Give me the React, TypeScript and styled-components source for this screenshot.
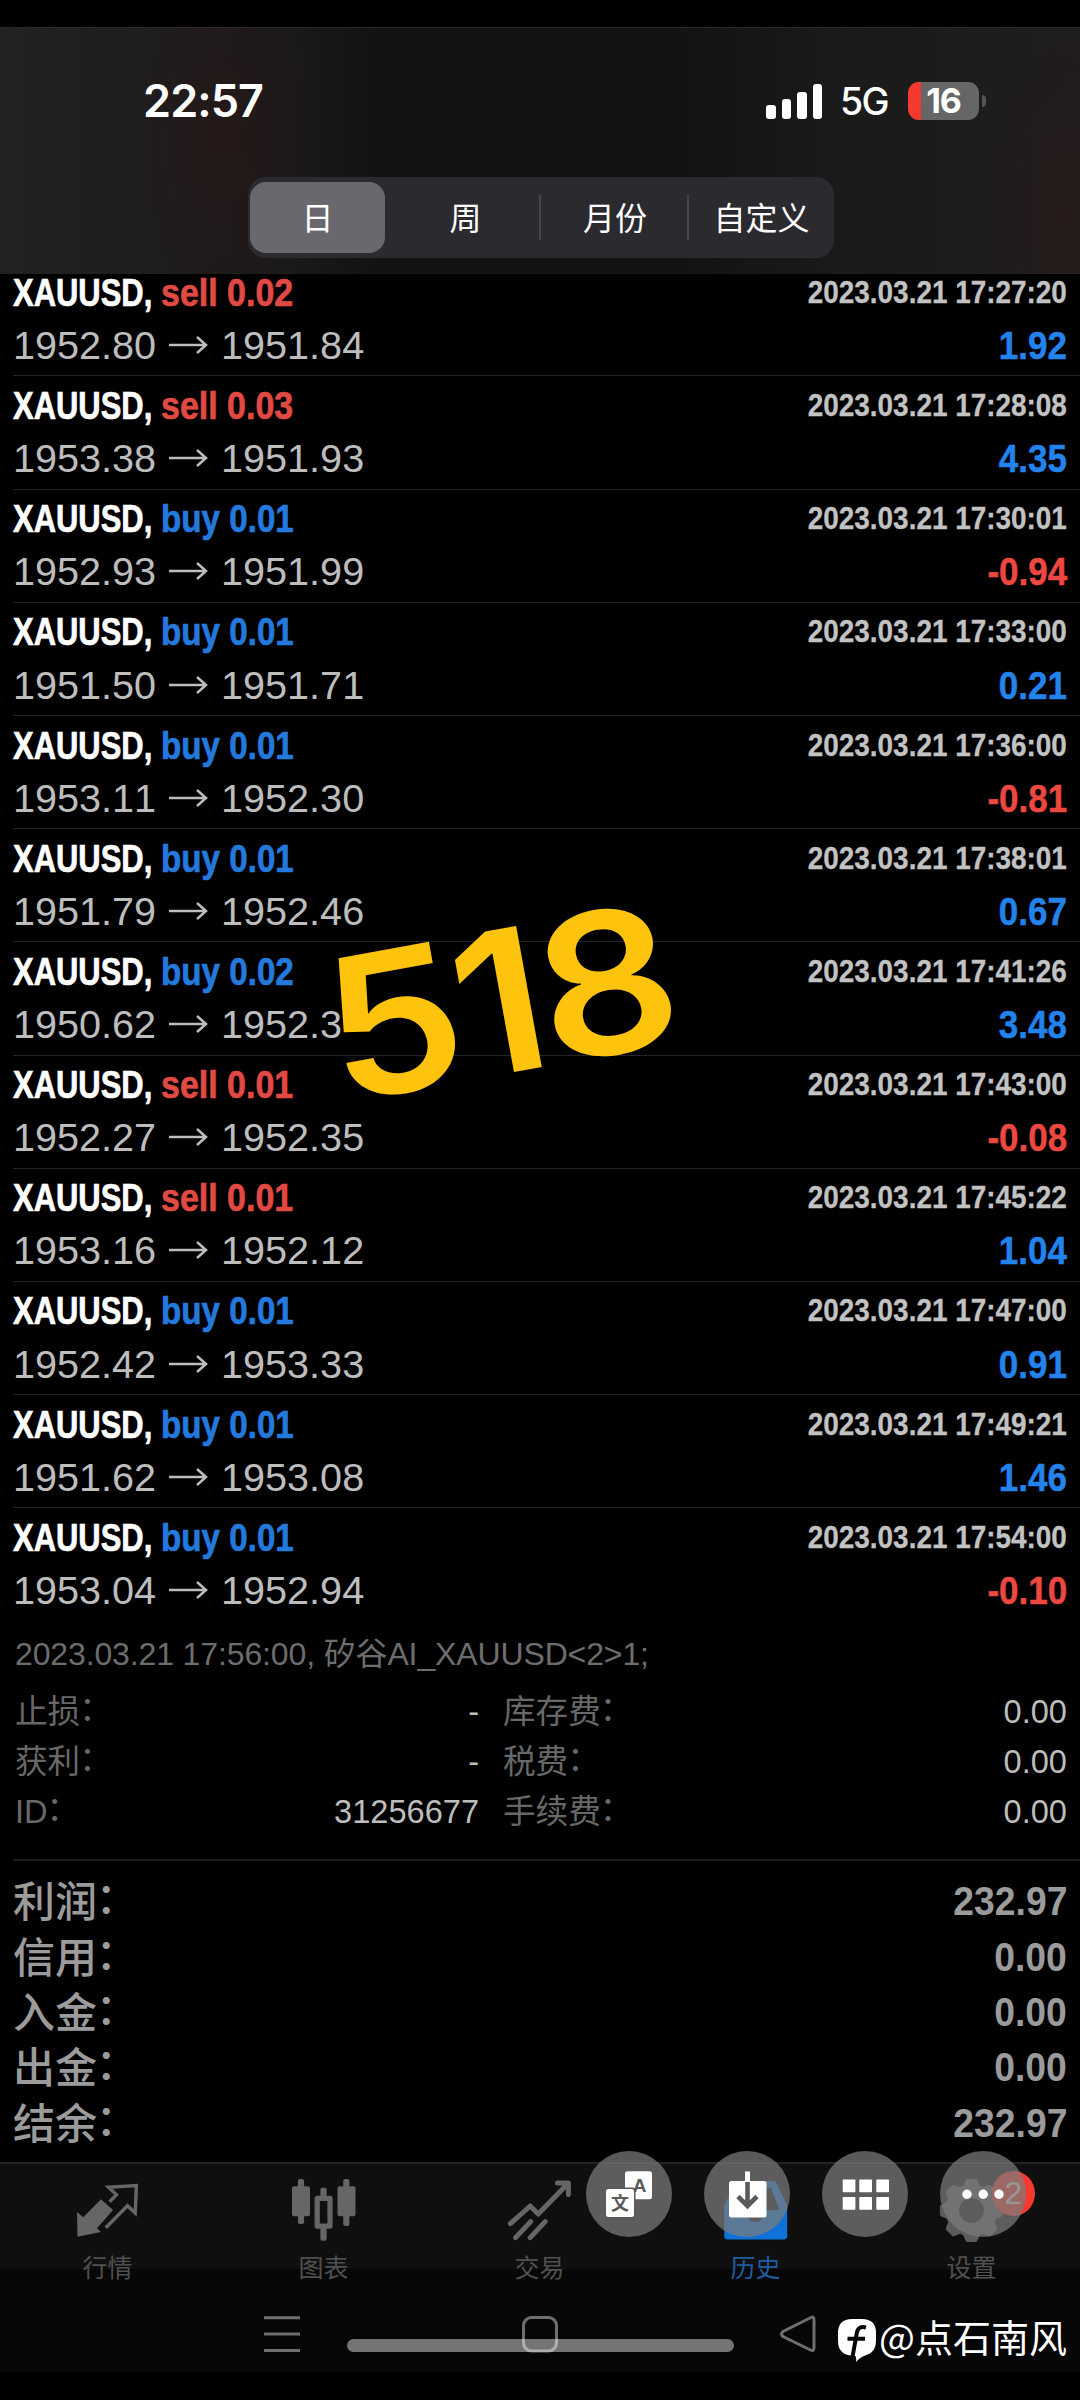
import React from "react";
import styled, { createGlobalStyle } from "styled-components";

const sans = '"Liberation Sans", "Noto Sans CJK SC", sans-serif';
const cjk = '"Noto Sans CJK SC", "Liberation Sans", sans-serif';
const ui = 'Inter, "Noto Sans CJK SC", sans-serif';

const Global = createGlobalStyle`
  html, body { margin: 0; background: #000; }
  * { box-sizing: border-box; }
`;

const Screen = styled.div`
  position: relative;
  width: 1080px;
  height: 2400px;
  overflow: hidden;
  display: flex;
  flex-direction: column;
  background: #000;
  font-family: ${sans};
  white-space: nowrap;
`;

const Header = styled.header`
  position: relative;
  z-index: 1;
  flex: none;
  height: 247px;
  margin-top: 27px;
  border-top: 1px solid #292929;
  display: flex;
  flex-direction: column;
  align-items: center;
  background:
    radial-gradient(ellipse 90px 180px at 225px 110px, rgba(70, 16, 16, 0.2), transparent),
    radial-gradient(ellipse 90px 190px at 1070px 190px, rgba(60, 20, 20, 0.24), transparent),
    linear-gradient(90deg, #222 0, #1f1d1d 150px, #1b1919 290px, #131313 380px, #131313 680px, #1b1b1b 860px, #201d1d 1080px);
`;

const StatusBar = styled.div`
  width: 100%;
  height: 149px;
  padding: 45px 94px 0 143px;
  display: flex;
  justify-content: space-between;
  align-items: flex-start;
  color: #fff;
  font-family: ${ui};
`;

const Clock = styled.div`
  font-size: 45px;
  font-weight: 600;
  line-height: 56px;
  letter-spacing: -0.9px;
`;

const StatusRight = styled.div`
  display: flex;
  align-items: center;
  padding-top: 8px;
`;

const Bars = styled.div`
  display: flex;
  align-items: flex-end;
  gap: 6px;
  height: 36px;
  margin-right: 18px;
`;

const Bar = styled.i<{ $h: number }>`
  width: 9.4px;
  height: ${(p) => p.$h}px;
  border-radius: 3px;
  background: #fff;
`;

const Network = styled.span`
  width: 50px;
  margin-right: 18px;
  font-size: 37.5px;
  font-weight: 500;
  line-height: 38px;
  letter-spacing: -1.8px;
  padding-top: 2px;
`;

const Battery = styled.span`
  width: 71px;
  height: 38px;
  border-radius: 11px;
  background: linear-gradient(90deg, #f5392f 13px, #666 13px);
  font-size: 34px;
  font-weight: 700;
  line-height: 37px;
  text-align: center;
  letter-spacing: -1px;
`;

const BatteryTip = styled.i`
  width: 4px;
  height: 12px;
  margin-left: 3px;
  border-radius: 0 4px 4px 0;
  background: #555;
`;

const Segmented = styled.div`
  width: 586px;
  height: 81px;
  margin-left: 2px;
  padding: 5px 2px;
  display: flex;
  align-items: center;
  border-radius: 18px;
  background: #2b2a2e;
`;

const Segment = styled.div<{ $w: number; $active?: boolean; $shift?: number }>`
  width: ${(p) => p.$w}px;
  height: 71px;
  padding: 0 0 4px ${(p) => p.$shift ?? 0}px;
  display: flex;
  align-items: center;
  justify-content: center;
  border-radius: 16px;
  background: ${(p) => (p.$active ? "#69686f" : "transparent")};
  color: #fff;
  font: 400 32px/66px ${cjk};
`;

const Divider = styled.i`
  width: 2px;
  height: 45px;
  background: #47464b;
`;

const List = styled.main`
  flex: none;
  height: 1358.4px;
  margin-top: -10.8px;
`;

const Row = styled.article`
  height: 113.2px;
  margin-left: 13px;
  padding: 4.6px 13px 0 0;
  border-bottom: 1.6px solid #242424;
  &:last-child { border-bottom-color: transparent; }
`;

const Line = styled.div<{ $gap?: number }>`
  display: flex;
  justify-content: space-between;
  height: 50px;
  margin-top: ${(p) => p.$gap ?? 0}px;
`;

const Deal = styled.div`
  display: flex;
  font-size: 38.6px;
  font-weight: 700;
  line-height: 50px;
  -webkit-text-stroke: 0.7px currentColor;
`;

const Ticker = styled.span`
  width: 148px;
  color: #fff;
  transform: scaleX(0.802);
  transform-origin: left;
`;

const Side = styled.span<{ $sell: boolean }>`
  color: ${(p) => (p.$sell ? "#e04a43" : "#2479dc")};
  transform: scaleX(${(p) => (p.$sell ? 0.88 : 0.86)});
  transform-origin: left;
`;

const Stamp = styled.time`
  color: #c2c2c2;
  font-size: 31px;
  font-weight: 700;
  line-height: 50px;
  -webkit-text-stroke: 0.3px currentColor;
  transform: scaleX(0.9);
  transform-origin: right;
`;

const Prices = styled.div`
  display: flex;
  align-items: center;
  color: #bdbdbd;
  font-size: 39.6px;
  font-kerning: none;
  line-height: 50px;
`;

const ArrowSvg = styled.svg`
  width: 40px;
  height: 20px;
  margin: 0 13px 0 12px;
`;

const Profit = styled.span<{ $neg: boolean }>`
  color: ${(p) => (p.$neg ? "#ec4840" : "#2383ec")};
  font-size: 39.6px;
  font-weight: 700;
  line-height: 50px;
  -webkit-text-stroke: 0.5px currentColor;
  transform: scaleX(0.885);
  transform-origin: right;
`;

const Details = styled.section`
  flex: none;
  height: 239.6px;
  margin-left: 13px;
  padding: 12.4px 13px 0 2px;
  border-bottom: 2px solid #1b1b1b;
  color: #6d6d6d;
`;

const Note = styled.div`
  font-size: 32px;
  font-weight: 400;
  line-height: 40px;
  letter-spacing: -0.13px;
`;

const DetailGrid = styled.div`
  margin-top: 11.6px;
  display: grid;
  grid-template-columns: 160px 304px 24px 200px 1fr;
  grid-auto-rows: 50.3px;
  font-size: 32.6px;
  line-height: 51px;
`;

const DetailLabel = styled.span`
  font-family: ${sans};
  font-weight: 400;
  color: #686868;
`;

const Colon = styled.span`
  display: inline-block;
  transform: translate(-0.03em, -0.1em);
`;

const DetailValue = styled.span`
  color: #bdbdbd;
  text-align: right;
`;

const Totals = styled.section`
  flex: none;
  height: 301px;
  padding: 12px 13px 0;
`;

const TotalRow = styled.div`
  height: 55.4px;
  display: flex;
  justify-content: space-between;
  color: #9b9b9b;
  line-height: 55px;
`;

const TotalLabel = styled.span`
  font-family: ${cjk};
  font-size: 42px;
  font-weight: 500;
  line-height: 51px;
`;

const TotalValue = styled.span`
  font-size: 41px;
  font-weight: 700;
  line-height: 56px;
  transform: scaleX(0.91);
  transform-origin: right;
`;

const TabBar = styled.nav`
  flex: none;
  height: 210px;
  display: flex;
  border-top: 2px solid #242424;
  background: linear-gradient(#0f0f0f 0, #0f0f0f 104px, #070707 106px, #060606 208px);
`;

const Tab = styled.div<{ $active?: boolean }>`
  position: relative;
  flex: 1;
  padding: 12px 1px 0 0;
  display: flex;
  flex-direction: column;
  align-items: center;
  color: ${(p) => (p.$active ? "#1f5c9f" : "#505050")};
  font: 400 25px/34px ${cjk};
`;

const TabSvg = styled.svg`
  width: 72px;
  height: 70px;
  margin: 0 0 3px 1px;
  overflow: visible;
`;

const Badge = styled.span`
  position: absolute;
  left: 128px;
  top: 7px;
  width: 43px;
  height: 45px;
  border-radius: 50%;
  background: #f5392f;
  color: #ddd;
  font: 400 32px/45px ${sans};
  text-align: center;
`;

const Sticker = styled.div`
  position: absolute;
  left: 326px;
  top: 914px;
  color: #fec40d;
  font: 600 197px/240px Inter, sans-serif;
  letter-spacing: -6px;
  transform: rotate(-10.3deg) scaleX(1.105);
  transform-origin: left center;
`;

const Floating = styled.div`
  position: absolute;
  left: 586px;
  top: 2151px;
  display: flex;
  gap: 32px;
`;

const Round = styled.svg`
  width: 86px;
  height: 86px;
  border-radius: 50%;
  background: rgba(124, 124, 124, 0.72);
`;

const HomeIndicator = styled.div`
  position: absolute;
  left: 347px;
  top: 2339px;
  width: 387px;
  height: 13px;
  border-radius: 7px;
  background: #747474;
`;

const SystemNav = styled.div`
  position: absolute;
  left: 264px;
  top: 2315px;
  width: 553px;
  height: 38px;
  display: flex;
  align-items: center;
  justify-content: space-between;
`;

const NavSvg = styled.svg`
  width: 38px;
  height: 38px;
  fill: none;
  stroke: rgba(255, 255, 255, 0.42);
  stroke-width: 3;
`;

const Watermark = styled.div`
  position: absolute;
  left: 838px;
  top: 2308px;
  display: flex;
  align-items: center;
  gap: 3px;
  color: #fff;
  font: 400 38px/54px ${cjk};
`;

const LogoSvg = styled.svg`
  width: 38px;
  height: 44px;
  margin-top: 11px;
`;

type Trade = [string, string, string, string, string, string];

const trades: Trade[] = [
  ["sell", "0.02", "1952.80", "1951.84", "17:27:20", "1.92"],
  ["sell", "0.03", "1953.38", "1951.93", "17:28:08", "4.35"],
  ["buy", "0.01", "1952.93", "1951.99", "17:30:01", "-0.94"],
  ["buy", "0.01", "1951.50", "1951.71", "17:33:00", "0.21"],
  ["buy", "0.01", "1953.11", "1952.30", "17:36:00", "-0.81"],
  ["buy", "0.01", "1951.79", "1952.46", "17:38:01", "0.67"],
  ["buy", "0.02", "1950.62", "1952.3", "17:41:26", "3.48"],
  ["sell", "0.01", "1952.27", "1952.35", "17:43:00", "-0.08"],
  ["sell", "0.01", "1953.16", "1952.12", "17:45:22", "1.04"],
  ["buy", "0.01", "1952.42", "1953.33", "17:47:00", "0.91"],
  ["buy", "0.01", "1951.62", "1953.08", "17:49:21", "1.46"],
  ["buy", "0.01", "1953.04", "1952.94", "17:54:00", "-0.10"],
];

const details = [
  ["止损", "-", "库存费", "0.00"],
  ["获利", "-", "税费", "0.00"],
  ["ID", "31256677", "手续费", "0.00"],
];

const totals = [
  ["利润", "232.97"],
  ["信用", "0.00"],
  ["入金", "0.00"],
  ["出金", "0.00"],
  ["结余", "232.97"],
];

const Arrow = () => (
  <ArrowSvg viewBox="0 0 40 20" fill="none" stroke="#bdbdbd" strokeWidth="2.5">
    <path d="M1 10H37.5M29 2l9 8-9 8" />
  </ArrowSvg>
);

function TradeRow({ trade }: { trade: Trade }) {
  const [side, lots, open, close, time, profit] = trade;
  return (
    <Row>
      <Line>
        <Deal>
          <Ticker>XAUUSD,</Ticker>
          <Side $sell={side === "sell"}>{side} {lots}</Side>
        </Deal>
        <Stamp>2023.03.21 {time}</Stamp>
      </Line>
      <Line $gap={2.2}>
        <Prices>{open}<Arrow />{close}</Prices>
        <Profit $neg={profit.startsWith("-")}>{profit}</Profit>
      </Line>
    </Row>
  );
}

const QuotesIcon = () => (
  <TabSvg viewBox="0 0 72 70">
    <path fill="#666" d="M5 36l6.2 5.3L29 23.3 41 34 25 52.3l4 3.7-23.5 4.7z" />
    <path fill="none" stroke="#666" strokeWidth="3.4" d="M37.5 25.7l7-7-8-7.4L64.4 9.5 63.2 37l-7.7-7.3-21.7 22" />
  </TabSvg>
);

const ChartIcon = () => (
  <TabSvg viewBox="0 0 72 70" fill="#666">
    <rect x="4" y="10.3" width="18" height="30" rx="2" />
    <rect x="9.9" y="3" width="6.2" height="45" rx="2" />
    <rect x="49.5" y="10.3" width="18" height="30" rx="2" />
    <rect x="55.2" y="3" width="6.2" height="47" rx="2" />
    <rect x="32.4" y="11.7" width="6.2" height="53" rx="2" />
    <rect x="29.2" y="22.3" width="12.8" height="27.8" fill="#0f0f0f" stroke="#666" strokeWidth="5.2" strokeLinejoin="round" />
  </TabSvg>
);

const TradeIcon = () => (
  <TabSvg viewBox="0 0 72 70" fill="none" stroke="#666" strokeWidth="5" strokeLinecap="round" strokeLinejoin="round">
    <path d="M6.4 47.6L26.2 30l8 8L64 7.4M53.4 7h11v11.4M11.6 61.6l15-16M26.2 61.6l15-16" />
  </TabSvg>
);

const HistoryIcon = () => (
  <TabSvg viewBox="0 0 72 70">
    <path fill="#0e72d8" fillRule="evenodd" d="M19 5h34q3 0 4 3l9.5 20q.7 2 .7 4v28q0 3.4-3.4 3.4H7.6q-3.4 0-3.4-3.4V32q0-2 .7-4L15 8q1-3 4-3zM21 12L12 34H26q1 12 9.5 12T45 34h14.5L51 12z" />
  </TabSvg>
);

const GearIcon = () => (
  <TabSvg viewBox="0 0 72 70">
    <g fill="#5c5c5c" transform="translate(35.5 34.5)">
      <path fillRule="evenodd" d="M0-26a26 26 0 1 0 0 52a26 26 0 1 0 0-52zM0-12.5a12.5 12.5 0 1 1 0 25a12.5 12.5 0 1 1 0-25z" />
      {[0, 45, 90, 135, 180, 225, 270, 315].map((a) => (
        <path key={a} transform={`rotate(${a})`} d="M-9-23l3-7q.6-1.6 2-1.6h8q1.4 0 2 1.6l3 7z" />
      ))}
    </g>
  </TabSvg>
);

const tabs = [
  { label: "行情", Icon: QuotesIcon },
  { label: "图表", Icon: ChartIcon },
  { label: "交易", Icon: TradeIcon },
  { label: "历史", Icon: HistoryIcon, active: true },
  { label: "设置", Icon: GearIcon, badge: "2" },
];

export default function App() {
  return (
    <Screen>
      <Global />
      <Header>
        <StatusBar>
          <Clock>22:57</Clock>
          <StatusRight>
            <Bars>
              {[14, 20, 27, 35].map((h) => <Bar key={h} $h={h} />)}
            </Bars>
            <Network>5G</Network>
            <Battery>16</Battery>
            <BatteryTip />
          </StatusRight>
        </StatusBar>
        <Segmented>
          <Segment $w={135} $active>日</Segment>
          <Segment $w={154} $shift={7}>周</Segment>
          <Divider />
          <Segment $w={146} $shift={2}>月份</Segment>
          <Divider />
          <Segment $w={143} $shift={2}>自定义</Segment>
        </Segmented>
      </Header>

      <List>
        {trades.map((t) => <TradeRow key={t[4]} trade={t} />)}
      </List>

      <Details>
        <Note>2023.03.21 17:56:00, 矽谷AI_XAUUSD&lt;2&gt;1;</Note>
        <DetailGrid>
          {details.map(([a, b, c, d]) => (
            <React.Fragment key={a}>
              <DetailLabel>{a}<Colon>：</Colon></DetailLabel>
              <DetailValue>{b}</DetailValue>
              <span />
              <DetailLabel>{c}<Colon>：</Colon></DetailLabel>
              <DetailValue>{d}</DetailValue>
            </React.Fragment>
          ))}
        </DetailGrid>
      </Details>

      <Totals>
        {totals.map(([label, value]) => (
          <TotalRow key={label}>
            <TotalLabel>{label}<Colon>：</Colon></TotalLabel>
            <TotalValue>{value}</TotalValue>
          </TotalRow>
        ))}
      </Totals>

      <TabBar>
        {tabs.map(({ label, Icon, active, badge }) => (
          <Tab key={label} $active={active}>
            <Icon />
            {label}
            {badge && <Badge>{badge}</Badge>}
          </Tab>
        ))}
      </TabBar>

      <Sticker>518</Sticker>

      <Floating>
        <Round viewBox="0 0 86 86">
          <rect x="39" y="20.3" width="27" height="28" rx="2.5" fill="#fff" />
          <text x="53.5" y="41" fontSize="19" fontWeight="700" fill="#5a5a5a" textAnchor="middle" fontFamily="Liberation Sans, sans-serif">A</text>
          <rect x="18.5" y="36.5" width="31" height="31" rx="3" fill="#5a5a5a" />
          <rect x="20" y="38" width="28" height="28" rx="2.5" fill="#fff" />
          <text x="34" y="58.5" fontSize="18" fontWeight="700" fill="#5a5a5a" textAnchor="middle" fontFamily="Noto Sans CJK SC, sans-serif">文</text>
        </Round>
        <Round viewBox="0 0 86 86">
          <rect x="25" y="30" width="37.5" height="36.5" rx="2.5" fill="#fff" />
          <path d="M43.5 20.5V30" stroke="#fff" strokeWidth="5" />
          <path d="M43.5 31V54M34 45.5l9.5 9.5 9.5-9.5" fill="none" stroke="#5a5a5a" strokeWidth="4.6" />
        </Round>
        <Round viewBox="0 0 86 86" fill="#fff">
          {[28.5, 46].map((y) => [20.7, 37.3, 54.3].map((x) => (
            <rect key={`${x}-${y}`} x={x} y={y} width="12.7" height="12.7" rx="0.8" />
          )))}
        </Round>
        <Round viewBox="0 0 86 86" fill="#fff">
          {[27, 43.2, 59].map((x) => <circle key={x} cx={x} cy="43.3" r="4.7" />)}
        </Round>
      </Floating>

      <HomeIndicator />
      <SystemNav>
        <NavSvg viewBox="0 0 38 38"><path d="M0 2.8H36M0 19H36M0 35.5H36" /></NavSvg>
        <NavSvg viewBox="0 0 38 38"><rect x="1.5" y="2.5" width="33" height="33.5" rx="8" /></NavSvg>
        <NavSvg viewBox="0 0 38 38"><path d="M32 2.500Q35 1 35 5V32Q35 37 31.500 35L4 21.500Q1 19 4 16.500z" /></NavSvg>
      </SystemNav>

      <Watermark>
        <LogoSvg viewBox="0 0 38 44">
          <path fill="#fff" d="M14 0h10q14 0 14 14v8q0 11-9.500 14Q22 38 18 43q.5-4-.5-6Q0 37 0 22v-8Q0 0 14 0z" />
          <path fill="none" stroke="#070707" strokeWidth="4" d="M28 8.500Q20 6.500 18.800 14L14.500 38M9.500 19.800H27" />
        </LogoSvg>
        <span>@点石南风</span>
      </Watermark>
    </Screen>
  );
}
